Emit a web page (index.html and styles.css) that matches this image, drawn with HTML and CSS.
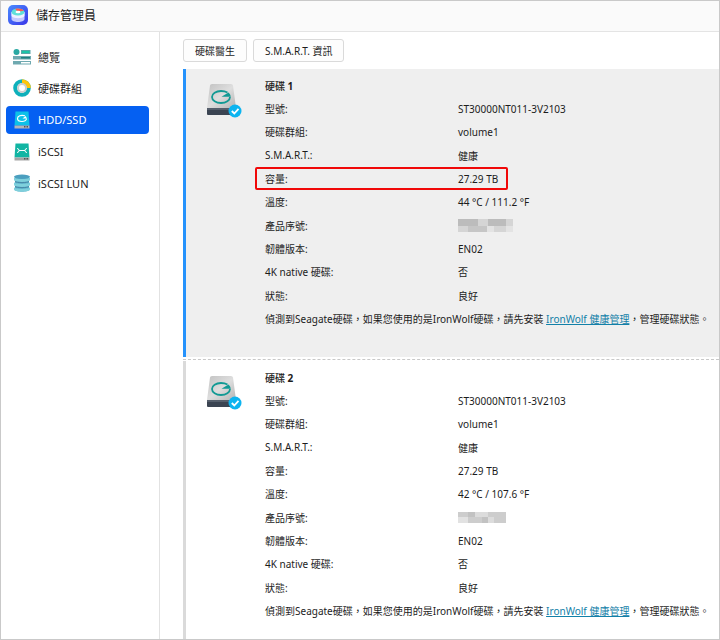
FILE: index.html
```html
<!DOCTYPE html>
<html lang="zh-Hant">
<head>
    <meta charset="UTF-8">
    <meta name="viewport" content="width=device-width, initial-scale=1.0">
    <title>儲存管理員</title>
    <link rel="stylesheet" href="styles.css">
</head>
<body>
    <!-- Shared drawings -->
    <svg class="defs" aria-hidden="true">
        <defs>
            <linearGradient id="metal" x1="0" y1="0" x2="1" y2="1">
                <stop offset="0" stop-color="#c2c2c2"/>
                <stop offset="0.5" stop-color="#dedede"/>
                <stop offset="1" stop-color="#b4b4b4"/>
            </linearGradient>
            <linearGradient id="appBg" x1="0" y1="0" x2="1" y2="1">
                <stop offset="0" stop-color="#4a8cff"/>
                <stop offset="1" stop-color="#3a35e8"/>
            </linearGradient>
        </defs>
        <symbol id="drive" viewBox="0 0 36 36">
            <path d="M4 2.500Q4.200 1 6 1H25Q26.700 1 27 2.500L30 25H1Z" fill="url(#metal)"/>
            <path d="M1 25H30V31Q30 32 29 32H2Q1 32 1 31Z" fill="#3b4452"/>
            <path d="M1 25H30V27H1Z" fill="#565f6c"/>
            <path d="M21.500 9.500C19.500 8.400 17.500 8 15 8C10 8 6 10.500 6 14C6 17.500 10 20 15 20C20 20 24 17.500 24 14" fill="none" stroke="#129a94" stroke-width="1.800"/>
            <path d="M15.500 13.800L22.500 9.500Q24.300 11 24.900 13.800Z" fill="#129a94"/>
            <circle cx="29" cy="28" r="6.500" fill="#0cb4f0"/>
            <path d="M25.800 28L28.300 30.500L32.500 25.800" fill="none" stroke="#fff" stroke-width="1.800"/>
        </symbol>
    </svg>

    <header class="titlebar">
        <svg class="app-icon" viewBox="0 0 20 20" aria-hidden="true">
            <rect width="20" height="20" rx="5" fill="url(#appBg)"/>
            <path d="M3.500 7V14C3.500 18 16.500 18 16.500 14V7Z" fill="#c3c9ff"/>
            <path d="M3.500 7V10.500C3.500 14 16.500 14 16.500 10.500V7Z" fill="#eef1ff"/>
            <ellipse cx="10" cy="7" rx="6.500" ry="3.600" fill="#5fe0d8"/>
            <path d="M10 7L7 3.800Q13 2.800 16 5.500Z" fill="#ff5a4e"/>
            <ellipse cx="10" cy="7" rx="2.500" ry="1.200" fill="#fff"/>
        </svg>
        <h1>儲存管理員</h1>
    </header>

    <div class="layout">
        <nav class="sidebar">
            <a class="nav-item" href="#overview">
                <svg class="nav-icon" viewBox="0 0 18 18" aria-hidden="true">
                    <circle cx="3.500" cy="4" r="3" fill="#2aa9a3"/>
                    <path d="M8 2H17.500V6H8Z" fill="#5aa5a8"/>
                    <path d="M9 3H16.500V5H9Z" fill="#1cc4a8"/>
                    <path d="M0 8H18V11.500H0Z" fill="#6fa9b0"/>
                    <path d="M8 9H17V10.500H8Z" fill="#1f7f80"/>
                    <path d="M0 13H18V16.500H0Z" fill="#6fa9b0"/>
                    <path d="M8 14H17V15.500H8Z" fill="#fff"/>
                </svg>
                總覽
            </a>
            <a class="nav-item" href="#groups">
                <svg class="nav-icon" viewBox="0 0 18 18" aria-hidden="true">
                    <circle cx="9" cy="9" r="6.800" fill="none" stroke="#0eb0bb" stroke-width="4"/>
                    <path d="M9 2.200A6.800 6.800 0 0 1 15.800 9" fill="none" stroke="#ffc60b" stroke-width="4"/>
                    <circle cx="9" cy="9" r="4" fill="#fff" stroke="#cfcfcf" stroke-width="2"/>
                </svg>
                硬碟群組
            </a>
            <a class="nav-item active" href="#hdd">
                <svg class="nav-icon" viewBox="0 0 18 18" aria-hidden="true">
                    <path d="M2.500 0.500H15.500L16.500 14.500H1.500Z" fill="#0dc1e8"/>
                    <path d="M1.500 14.500H16.500V17.500H1.500Z" fill="#b5b5b5"/>
                    <path d="M11 15H12.500V16.500H11ZM13.500 15H15V16.500H13.500Z" fill="#555"/>
                    <path d="M12 4.800C8 3.500 4.500 5 4.500 7.500S7 10.500 9 10.500S13.500 9.500 13.500 7.500" fill="none" stroke="#fff" stroke-width="1.200"/>
                    <path d="M9.500 7.500L12.500 5L14 7.500Z" fill="#fff"/>
                </svg>
                HDD/SSD
            </a>
            <a class="nav-item" href="#iscsi">
                <svg class="nav-icon" viewBox="0 0 18 18" aria-hidden="true">
                    <path d="M2.500 0.500H15.500L16.500 14.500H1.500Z" fill="#12b5a3"/>
                    <path d="M1.500 14.500H16.500V17.500H1.500Z" fill="#a5a5a5"/>
                    <path d="M11 15H12.500V16.500H11ZM13.500 15H15V16.500H13.500Z" fill="#555"/>
                    <path d="M4 5.500Q6 5.500 6 7.500Q6 9.500 4 9.500M14 5.500Q12 5.500 12 7.500Q12 9.500 14 9.500M6 7.500H12" fill="none" stroke="#fff" stroke-width="1"/>
                </svg>
                iSCSI
            </a>
            <a class="nav-item" href="#lun">
                <svg class="nav-icon" viewBox="0 0 18 18" aria-hidden="true">
                    <path d="M2 2V16C2 18.300 16 18.300 16 16V2Z" fill="#5fb4cc"/>
                    <path d="M1 3C1 5.500 17 5.500 17 3V6C17 8.500 1 8.500 1 6ZM1 8C1 10.500 17 10.500 17 8V11C17 13.500 1 13.500 1 11ZM1 13C1 15.500 17 15.500 17 13V15.500C17 18.300 1 18.300 1 15.500Z" fill="#7fd0dc"/>
                    <path d="M2 7.500C4 9 14 9 16 7.500M2 12.500C4 14 14 14 16 12.500" fill="none" stroke="#4787a8" stroke-width="1"/>
                    <ellipse cx="9" cy="2.800" rx="8" ry="2.200" fill="#4b9fbf"/>
                </svg>
                iSCSI LUN
            </a>
        </nav>

        <main class="content">
            <div class="toolbar">
                <button type="button">硬碟醫生</button>
                <button type="button">S.M.A.R.T. 資訊</button>
            </div>

            <section class="disk selected">
                <svg class="disk-icon" aria-hidden="true"><use href="#drive"/></svg>
                <div class="disk-body">
                    <h2>硬碟 <b>1</b></h2>
                    <dl class="info">
                        <div class="row"><dt>型號:</dt><dd>ST30000NT011-3V2103</dd></div>
                        <div class="row"><dt>硬碟群組:</dt><dd>volume1</dd></div>
                        <div class="row"><dt>S.M.A.R.T.:</dt><dd>健康</dd></div>
                        <div class="row marked"><dt>容量:</dt><dd>27.29 TB</dd></div>
                        <div class="row"><dt>溫度:</dt><dd>44 °C / 111.2 °F</dd></div>
                        <div class="row">
                            <dt>產品序號:</dt>
                            <dd>
                                <svg class="mosaic" width="55" height="13" aria-hidden="true">
                                    <path d="M0 0H55V13H0Z" fill="#d5d5d5"/>
                                    <path d="M0 0H20V7H0ZM30 0H48V7H30Z" fill="#bcbcbc"/>
                                    <path d="M10 7H29V13H10Z" fill="#c6c6c6"/>
                                    <path d="M29 7H36V13H29ZM48 7H55V13H48Z" fill="#e3e3e3"/>
                                </svg>
                            </dd>
                        </div>
                        <div class="row"><dt>韌體版本:</dt><dd>EN02</dd></div>
                        <div class="row"><dt>4K native 硬碟:</dt><dd>否</dd></div>
                        <div class="row"><dt>狀態:</dt><dd>良好</dd></div>
                    </dl>
                    <p class="note">偵測到Seagate硬碟，如果您使用的是IronWolf硬碟，請先安裝 <a href="#ironwolf">IronWolf 健康管理</a>，管理硬碟狀態。</p>
                </div>
            </section>

            <section class="disk">
                <svg class="disk-icon" aria-hidden="true"><use href="#drive"/></svg>
                <div class="disk-body">
                    <h2>硬碟 <b>2</b></h2>
                    <dl class="info">
                        <div class="row"><dt>型號:</dt><dd>ST30000NT011-3V2103</dd></div>
                        <div class="row"><dt>硬碟群組:</dt><dd>volume1</dd></div>
                        <div class="row"><dt>S.M.A.R.T.:</dt><dd>健康</dd></div>
                        <div class="row"><dt>容量:</dt><dd>27.29 TB</dd></div>
                        <div class="row"><dt>溫度:</dt><dd>42 °C / 107.6 °F</dd></div>
                        <div class="row">
                            <dt>產品序號:</dt>
                            <dd>
                                <svg class="mosaic" width="48" height="11" aria-hidden="true">
                                    <path d="M0 0H48V11H0Z" fill="#cdcdcd"/>
                                    <path d="M0 5H10V11H0Z" fill="#e2e2e2"/>
                                    <path d="M17 0H30V5H17ZM30 5H36V11H30Z" fill="#dcdcdc"/>
                                    <path d="M10 0H17V5H10ZM24 5H30V11H24Z" fill="#c2c2c2"/>
                                </svg>
                            </dd>
                        </div>
                        <div class="row"><dt>韌體版本:</dt><dd>EN02</dd></div>
                        <div class="row"><dt>4K native 硬碟:</dt><dd>否</dd></div>
                        <div class="row"><dt>狀態:</dt><dd>良好</dd></div>
                    </dl>
                    <p class="note">偵測到Seagate硬碟，如果您使用的是IronWolf硬碟，請先安裝 <a href="#ironwolf">IronWolf 健康管理</a>，管理硬碟狀態。</p>
                </div>
            </section>
        </main>
    </div>
</body>
</html>
```
FILE: styles.css
```css
* {
    margin: 0;
    padding: 0;
    box-sizing: border-box;
}

body {
    font-family: "Noto Sans", "Noto Sans CJK TC", sans-serif;
    font-size: 10px;
    color: #1c1c1c;
    background-color: #fff;
    height: 100vh;
    border: 1px solid #c9c9c9;
    display: flex;
    flex-direction: column;
    overflow: hidden;
}

.defs {
    position: absolute;
    width: 0;
    height: 0;
}

.titlebar {
    display: flex;
    align-items: center;
    gap: 8px;
    height: 31px;
    padding: 0 7px 3px;
    flex-shrink: 0;
    background-color: #fafafa;
    border-bottom: 1px solid #e4e4e4;
}

.titlebar h1 {
    font-size: 12px;
    font-weight: 400;
}

.app-icon {
    width: 20px;
    height: 20px;
}

.layout {
    display: flex;
    flex: 1;
    min-height: 0;
}

/* Sidebar */
.sidebar {
    display: grid;
    grid-template-rows: repeat(5, 1fr);
    align-items: center;
    width: 158px;
    height: 158px;
    flex-shrink: 0;
    margin-top: 9px;
    padding: 0 10px 0 5px;
}

.nav-item {
    display: flex;
    align-items: center;
    gap: 7px;
    height: 28px;
    padding-left: 7px;
    border-radius: 4px;
    font-size: 11px;
    color: #1c1c1c;
    text-decoration: none;
}

.nav-item.active {
    background-color: #0560f2;
    color: #fff;
}

.nav-icon {
    width: 18px;
    height: 18px;
}

/* Content */
.content {
    flex: 1;
    min-width: 0;
    padding-left: 23px;
    border-left: 1px solid #e2e2e2;
    overflow: hidden;
}

.toolbar {
    display: flex;
    gap: 6px;
    padding: 7px 0;
}

.toolbar button {
    height: 23px;
    padding: 0 11px;
    font: inherit;
    color: #1c1c1c;
    background-color: #fdfdfd;
    border: 1px solid #dadada;
    border-radius: 3px;
}

.disk {
    display: flex;
    height: 288px;
    padding: 6px 0 0 20px;
    border-left: 3px solid #dadada;
    margin-bottom: 4px;
}

.disk.selected {
    position: relative;
    background-color: #efefef;
    border-left-color: #2592fc;
}

/* Dashed separator under the selected disk */
.disk.selected::after {
    content: "";
    position: absolute;
    left: -3px;
    right: 0;
    bottom: -3px;
    border-bottom: 1px dashed #c8c8c8;
}

.disk-icon {
    width: 36px;
    height: 36px;
    margin-top: 8px;
}

.disk-body {
    flex: 1;
    min-width: 0;
    padding-left: 13px;
}

.disk-body h2 {
    padding-left: 10px;
    font-size: 10px;
    font-weight: 500;
    line-height: 22px;
}

.info {
    display: grid;
    grid-auto-rows: 1fr;
    height: 210px;
}

.row {
    display: flex;
    align-items: center;
    padding-left: 10px;
}

.row dt {
    width: 193px;
}

.row.marked {
    width: 253px;
    padding-left: 8px;
    border: 2px solid #f00808;
    border-radius: 2px;
}

.mosaic {
    display: block;
}

.note {
    padding-left: 10px;
    line-height: 24px;
    white-space: nowrap;
}

.note a {
    color: #1280a8;
}
```
